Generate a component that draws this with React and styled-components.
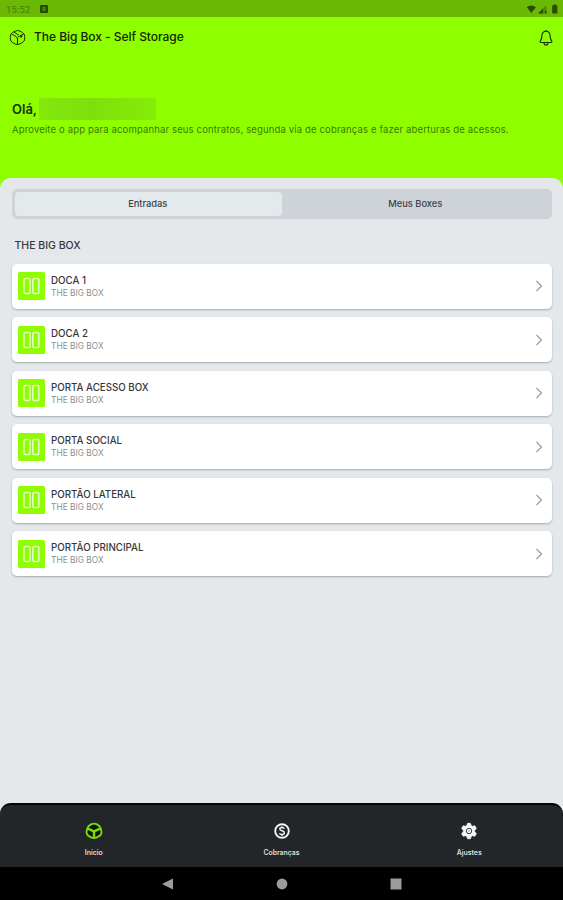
import React, { useState } from "react";
import styled, { createGlobalStyle } from "styled-components";

const GlobalStyle = createGlobalStyle`
  * {
    box-sizing: border-box;
  }

  body {
    margin: 0;
    background: #8fff00;
    font-family: Inter, Roboto, sans-serif;
  }

  button {
    font-family: inherit;
    border: none;
    margin: 0;
  }
`;

const Screen = styled.div`
  display: flex;
  flex-direction: column;
  width: 100%;
  height: 900px;
  overflow: hidden;
  background: #8fff00;
`;

const StatusBar = styled.div`
  display: flex;
  align-items: center;
  justify-content: space-between;
  height: 17px;
  flex-shrink: 0;
  padding: 1px 4px 0 6px;
  background: #6cb905;
  color: #438000;
  font-family: Roboto, sans-serif;
  font-size: 9.5px;
  letter-spacing: 0.2px;
`;

const StatusGroup = styled.div`
  display: flex;
  align-items: center;
  gap: ${({ $gap }) => $gap}px;
`;

const AppBar = styled.header`
  display: flex;
  align-items: center;
  height: 41px;
  flex-shrink: 0;
  padding: 0 9px;
  color: #183000;

  svg:last-child {
    margin-left: auto;
  }
`;

const AppTitle = styled.h1`
  margin: -1px 0 0 8px;
  font-size: 12px;
  line-height: 16px;
  font-weight: 500;
  letter-spacing: -0.04px;
  color: #142600;
`;

const Welcome = styled.section`
  height: 119.5px;
  flex-shrink: 0;
  padding: 40px 12px 0;
`;

const Greeting = styled.div`
  display: flex;
  align-items: center;
  height: 22px;
  font-size: 13px;
  font-weight: 600;
  color: #1a3300;
`;

const HiddenName = styled.span`
  width: 117px;
  height: 22px;
  margin-left: 2px;
  background: linear-gradient(90deg, #83e80c, #7ee00a 45%, #86ec08);
`;

const Subtitle = styled.p`
  margin: 4px 0 0;
  font-size: 9.5px;
  line-height: 12px;
  letter-spacing: 0.15px;
  white-space: nowrap;
  color: #3c7800;
`;

const Sheet = styled.main`
  display: flex;
  flex-direction: column;
  flex: 1;
  min-height: 0;
  padding-top: 11.5px;
  border-radius: 11px 11px 0 0;
  background: #e4e8eb;
`;

const Segmented = styled.div`
  display: flex;
  height: 29.5px;
  flex-shrink: 0;
  margin: 0 11px 0 12px;
  padding: 2.5px;
  border-radius: 5px;
  background: #ced3da;
`;

const Segment = styled.button`
  flex: 1;
  padding: 0 1px 1px 0;
  border-radius: 4px;
  background: ${({ $active }) => ($active ? "#e4e9ec" : "transparent")};
  color: #3e4246;
  font-size: 9.3px;
  font-weight: 500;
`;

const SectionTitle = styled.h2`
  margin: 20px 0 0 14.5px;
  font-size: 10.5px;
  line-height: 14px;
  font-weight: 500;
  color: #35393d;
`;

const List = styled.div`
  display: flex;
  flex-direction: column;
  flex: 1;
  gap: 8.5px;
  padding: 11px 11px 0 12px;
`;

const Card = styled.div`
  display: flex;
  align-items: center;
  height: 45px;
  padding: 0 8px 0 6px;
  border-radius: 5px;
  background: #fff;
  box-shadow: 0 1px 2px rgba(70, 78, 86, 0.4);
`;

const Tile = styled.div`
  display: flex;
  align-items: center;
  justify-content: center;
  width: 27px;
  height: 28px;
  border-radius: 1.5px;
  background: #8fff00;
`;

const CardText = styled.div`
  flex: 1;
  margin-left: 6px;
`;

const CardTitle = styled.div`
  font-size: 9.75px;
  line-height: 13px;
  font-weight: 500;
  color: #34373a;
`;

const CardSubtitle = styled.div`
  font-size: 8.4px;
  line-height: 12px;
  color: #8b8e91;
`;

const TabBar = styled.nav`
  display: flex;
  height: 64px;
  flex-shrink: 0;
  border-top: 2px solid #030506;
  border-radius: 11px 11px 0 0;
  background: #222629;
`;

const TabBarBack = styled.div`
  flex-shrink: 0;
  background: #e4e8eb;
`;

const Tab = styled.div`
  display: flex;
  flex-direction: column;
  align-items: center;
  flex: 1;
  padding-top: 17px;
  color: ${({ $active }) => ($active ? "#7ddb0c" : "#f4f5f5")};
`;

const TabLabel = styled.span`
  margin-top: 7.5px;
  font-size: 6.9px;
  line-height: 9px;
  font-weight: 600;
  color: #dcdedf;
`;

const SystemBar = styled.div`
  display: flex;
  align-items: center;
  justify-content: center;
  gap: 102px;
  height: 33px;
  flex-shrink: 0;
  background: #000;
`;

const BoxIcon = () => (
  <svg width="17" height="17" viewBox="0 0 17 17" fill="none" stroke="currentColor" strokeWidth="1" strokeLinejoin="round">
    <path d="M6.2 2.1Q8.5.9 10.8 2.1L13.6 3.6Q15.7 4.9 15.7 7.4V9.9Q15.6 12.3 13.7 13.4L10.7 15Q8.5 16.1 6.3 15L3.3 13.4Q1.4 12.3 1.3 9.9V7.4Q1.3 4.9 3.4 3.6Z" />
    <path d="M2.2 4.8 6.9 7.5Q8.5 8.4 8.5 10V15.5M8.7 8.2 14.8 4.8M5 3.2 9.8 6" />
    <path d="m11.3 6.8 2-1.1v2.2l-2 1.2z" fill="currentColor" stroke="none" />
  </svg>
);

const BellIcon = () => (
  <svg width="16" height="18" viewBox="0 0 16 18" fill="none" stroke="currentColor" strokeWidth="1.1" strokeLinejoin="round">
    <path d="M8 2.2C5.4 2.2 4.1 4.1 4 6.3 3.9 9.7 3.4 10.7 2.4 11.9 1.7 12.9 2.1 13.5 3 13.5H13C13.9 13.5 14.3 12.9 13.6 11.9 12.6 10.7 12.1 9.7 12 6.3 11.9 4.1 10.6 2.2 8 2.2Z" />
    <path d="M6 13.6v.4a2 2 0 0 0 4 0v-.4M7.2 1.8h1.6" />
  </svg>
);

const DoorIcon = () => (
  <svg width="17" height="18" viewBox="0 0 17 18" fill="none" stroke="#eaffd0" strokeWidth="1.4">
    <rect x="1" y="1.5" width="6" height="15" rx="1.3" />
    <rect x="9.8" y="1.5" width="6" height="15" rx="1.3" />
  </svg>
);

const ChevronIcon = () => (
  <svg width="10" height="14" viewBox="0 0 10 14" fill="none" stroke="#999ca0" strokeWidth="1.2">
    <path d="m2.5 2 5 5-5 5" />
  </svg>
);

const HomeIcon = () => (
  <svg width="18" height="18" viewBox="0 0 18 18">
    <path
      d="M6.5 2.2Q9 1 11.5 2.2L14.2 3.9Q16.5 6.6 16.5 10.2 16.4 12.4 14.7 13.6L11.9 15.4Q9 16.8 6.1 15.4L3.3 13.6Q1.6 12.4 1.5 10.2 1.5 6.6 3.8 3.9Z"
      fill="#0b1606"
      stroke="currentColor"
      strokeWidth="1.9"
    />
    <path d="M2.2 6.4 9 9.4 15.8 6.4M9 8.8V15.8" fill="none" stroke="currentColor" strokeWidth="2.5" />
    <path d="M6.6 8.2h4.8L9 11.5z" fill="currentColor" />
  </svg>
);

const CoinIcon = () => (
  <svg width="18" height="18" viewBox="0 0 18 18" fill="none" stroke="currentColor">
    <circle cx="9" cy="9" r="6.8" strokeWidth="1.9" />
    <path d="M11.3 6.7C11 5.8 10.1 5.5 9 5.5 7.7 5.5 6.8 6 6.8 7 6.8 9.4 11.4 8.1 11.4 10.8 11.4 12 10.3 12.5 9 12.5 7.8 12.5 6.8 12.1 6.5 11.1M9 4.2v1.4M9 12.5v1.4" strokeWidth="1.4" />
  </svg>
);

const GearIcon = () => (
  <svg width="18" height="18" viewBox="0 0 18 18">
    <path
      d="M7.6 1.3h2.8l.9 2.4 1 .6 2.5-.5 1.5 2.5-1.6 1.9v1.6l1.6 1.9-1.5 2.5-2.5-.5-1 .6-.9 2.4H7.6l-.9-2.4-1-.6-2.5.5-1.5-2.5 1.6-1.9V8.2L1.7 6.3l1.5-2.5 2.5.5 1-.6z"
      fill="currentColor"
      stroke="currentColor"
      strokeWidth=".8"
      strokeLinejoin="round"
    />
    <circle cx="9" cy="9" r="2.7" fill="none" stroke="#3c4043" strokeWidth="1" />
    <circle cx="9" cy="9" r=".6" fill="#3c4043" />
  </svg>
);

const NotificationIcon = () => (
  <svg width="8" height="8" viewBox="0 0 8 8">
    <rect width="8" height="8" rx="1" fill="#244c00" />
    <path d="M2.5 2.2h3v3.6h-3z" fill="#5da300" />
    <path d="M3.5 3.2h1v1.6h-1z" fill="#244c00" />
  </svg>
);

const SignalIcons = () => (
  <svg width="34" height="11" viewBox="0 0 34 11" fill="#294e00">
    <path d="M1.8 3.2Q6.3-.4 10.9 3.2L6.3 9Z" />
    <path d="M21.5 1V9.5H13Z" opacity=".4" />
    <path d="M18 4.4V9.5H13ZM20 7h1.5v2.5H20z" />
    <path d="M27.2 1.3h1.2V.4h2.8v.9h1.2V9.5h-5.2z" />
  </svg>
);

const entries = [
  "DOCA 1",
  "DOCA 2",
  "PORTA ACESSO BOX",
  "PORTA SOCIAL",
  "PORTÃO LATERAL",
  "PORTÃO PRINCIPAL",
];

const tabs = [
  { label: "Início", Icon: HomeIcon },
  { label: "Cobranças", Icon: CoinIcon },
  { label: "Ajustes", Icon: GearIcon },
];

const App = () => {
  const [segment, setSegment] = useState("Entradas");

  return (
    <Screen>
      <GlobalStyle />
      <StatusBar>
        <StatusGroup $gap={9}>
          <span>15:52</span>
          <NotificationIcon />
        </StatusGroup>
        <SignalIcons />
      </StatusBar>
      <AppBar>
        <BoxIcon />
        <AppTitle>The Big Box - Self Storage</AppTitle>
        <BellIcon />
      </AppBar>
      <Welcome>
        <Greeting>
          Olá,
          <HiddenName />
        </Greeting>
        <Subtitle>
          Aproveite o app para acompanhar seus contratos, segunda via de cobranças e fazer aberturas de acessos.
        </Subtitle>
      </Welcome>
      <Sheet>
        <Segmented>
          {["Entradas", "Meus Boxes"].map((name) => (
            <Segment key={name} $active={segment === name} onClick={() => setSegment(name)}>
              {name}
            </Segment>
          ))}
        </Segmented>
        <SectionTitle>THE BIG BOX</SectionTitle>
        <List>
          {entries.map((name) => (
            <Card key={name}>
              <Tile>
                <DoorIcon />
              </Tile>
              <CardText>
                <CardTitle>{name}</CardTitle>
                <CardSubtitle>THE BIG BOX</CardSubtitle>
              </CardText>
              <ChevronIcon />
            </Card>
          ))}
        </List>
      </Sheet>
      <TabBarBack>
        <TabBar>
          {tabs.map(({ label, Icon }, index) => (
            <Tab key={label} $active={index === 0}>
              <Icon />
              <TabLabel>{label}</TabLabel>
            </Tab>
          ))}
        </TabBar>
      </TabBarBack>
      <SystemBar>
        <svg width="12" height="12" viewBox="0 0 12 12">
          <path d="M11 .5v11L0 6z" fill="#9c9c9c" />
        </svg>
        <svg width="12" height="12" viewBox="0 0 12 12">
          <circle cx="6" cy="6" r="5.4" fill="#9c9c9c" />
        </svg>
        <svg width="12" height="12" viewBox="0 0 12 12">
          <path d="M.5.5h11v11H.5z" fill="#9c9c9c" />
        </svg>
      </SystemBar>
    </Screen>
  );
};

export default App;
